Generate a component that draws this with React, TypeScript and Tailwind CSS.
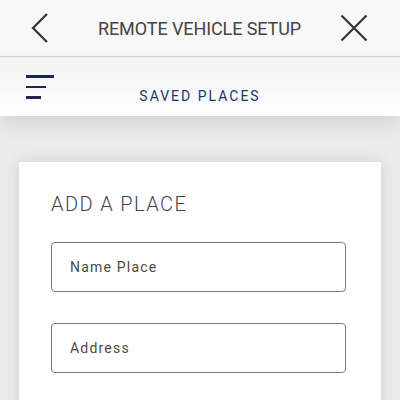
import { ReactNode } from "react";

const fields = ["Name Place", "Address"];

function Field({ children }: { children: ReactNode }) {
  return (
    <div className="flex h-[50px] items-center rounded-[4px] border-[1.5px] border-[#7a7a7a] pl-[18px] text-[14px] tracking-[1.2px] text-[#4a4a4a]">
      {children}
    </div>
  );
}

export default function App() {
  return (
    <main className="h-[400px] w-[400px] overflow-hidden bg-[#ebebeb] font-['Roboto',sans-serif]">
      <header className="flex h-[57px] items-center border-b border-[#d4d4d4] bg-[#f8f8f8] pl-[31px] pr-[32px]">
        <svg width="18" height="30" viewBox="0 0 18 30" fill="none" stroke="#333" strokeWidth="2.2">
          <path d="M16 1 L2 15 L16 29" />
        </svg>
        <h1 className="flex-1 pl-[10px] pt-[1px] text-center text-[18px] tracking-[-0.1px] text-[#444]">REMOTE VEHICLE SETUP</h1>
        <svg width="28" height="28" viewBox="0 0 28 28" fill="none" stroke="#333" strokeWidth="2.2">
          <path d="M1.5 1.5 L26.5 26.5 M26.5 1.5 L1.5 26.5" />
        </svg>
      </header>

      <div className="relative z-10 h-[59px] bg-gradient-to-b from-[#f2f2f2] to-white shadow-[0_8px_18px_rgba(0,0,0,0.10)]">
        <div className="flex pl-[26px] pr-[26px] pt-[18px]">
          <div className="flex w-[28px] flex-col gap-[8px]">
            <span className="block h-[2.5px] w-[28px] bg-[#1b2a4a]" />
            <span className="block h-[2.5px] w-[20px] bg-[#1b2a4a]" />
            <span className="block h-[2.5px] w-[15px] bg-[#1b2a4a]" />
          </div>
          <p className="flex-1 pt-[11px] text-center text-[14px] tracking-[2px] text-[#1f3566]">SAVED PLACES</p>
          <div className="w-[28px]" />
        </div>
      </div>

      <section className="mx-[19px] mt-[46px] h-[300px] bg-white pl-[32px] pr-[35px] pt-[27px] shadow-[0_0_14px_rgba(0,0,0,0.12)]">
        <h2 className="text-[20px] font-light tracking-[1.4px] text-[#444]">ADD A PLACE</h2>
        <div className="mt-[23px] flex flex-col gap-[31px]">
          {fields.map((f) => (
            <Field key={f}>{f}</Field>
          ))}
        </div>
      </section>
    </main>
  );
}
